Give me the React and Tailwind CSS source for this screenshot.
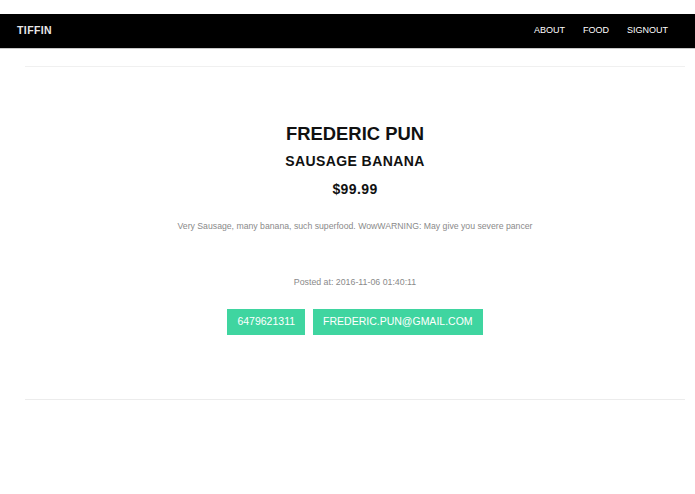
import React from "react";

const nav = ["ABOUT", "FOOD", "SIGNOUT"];

export default function App() {
  return (
    <div className="min-h-[494px] bg-white pt-[14px] font-['Liberation_Sans',Arial,sans-serif]">
      <header className="flex h-[35px] items-center justify-between border-b border-[#c8c8c8] bg-black pl-[17px] pr-[27px]">
        <span className="text-[10.5px] font-bold tracking-[0.4px] text-[#e8e8e8]">TIFFIN</span>
        <nav className="flex gap-[18px]">
          {nav.map((n) => (
            <a key={n} className="text-[9px] text-white">
              {n}
            </a>
          ))}
        </nav>
      </header>

      <main className="pl-[25px] pr-[10px] pt-[17px]">
        <div className="h-px bg-[#f0f0f0]" />
        <section className="flex flex-col items-center pt-[56px] text-center">
          <h1 className="text-[18.4px] font-bold leading-[22px] text-[#111]">FREDERIC PUN</h1>
          <h2 className="mt-[7px] text-[14px] font-bold tracking-[0.4px] leading-[18px] text-[#111]">
            SAUSAGE BANANA
          </h2>
          <p className="mt-[10px] text-[14px] font-bold tracking-[0.4px] leading-[18px] text-[#111]">$99.99</p>
          <p className="mt-[22px] text-[8.7px] leading-[12px] text-[#8a8a8a]">
            Very Sausage, many banana, such superfood. WowWARNING: May give you severe pancer
          </p>
          <p className="mt-[44px] text-[8.8px] leading-[12px] text-[#8a8a8a]">Posted at: 2016-11-06 01:40:11</p>
          <div className="mt-[21px] flex gap-[8px]">
            <a className="flex h-[26px] items-center bg-[#3fd5a0] px-[10px] text-[10.5px] text-white">6479621311</a>
            <a className="flex h-[26px] items-center bg-[#3fd5a0] px-[10px] text-[10.5px] text-white">
              FREDERIC.PUN@GMAIL.COM
            </a>
          </div>
        </section>
        <div className="mt-[64px] h-px bg-[#ececec]" />
      </main>
    </div>
  );
}
